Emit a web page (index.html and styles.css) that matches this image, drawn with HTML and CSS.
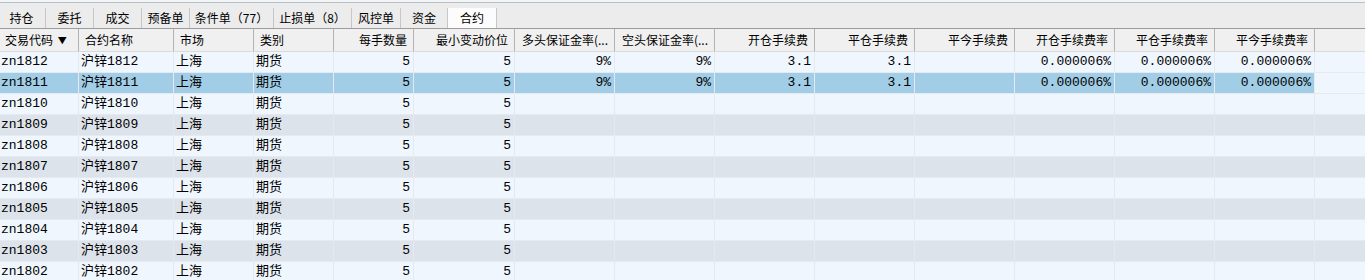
FILE: index.html
```html
<!DOCTYPE html>
<html lang="zh-CN">
<head>
    <meta charset="UTF-8">
    <title>合约</title>
    <link rel="stylesheet" href="styles.css">
    <script>
        const contracts = [];
        for (let m = 12; m >= 2; m--) {
            const month = '18' + String(m).padStart(2, '0');
            contracts.push({ code: 'zn' + month, name: '沪锌' + month });
        }

        window.onload = () => {
            const $rows = document.getElementById('rows');

            contracts.forEach((c, i) => {
                const full = i < 2;
                const cells = [
                    c.code, c.name, '上海', '期货', '5', '5',
                    full ? '9%' : '', full ? '9%' : '',
                    full ? '3.1' : '', full ? '3.1' : '', '',
                    full ? '0.000006%' : '', full ? '0.000006%' : '', full ? '0.000006%' : '',
                ];

                const $row = document.createElement('div');
                $row.className = 'row';
                if (i === 1) {
                    $row.classList.add('selected');
                } else if (i % 2 === 1) {
                    $row.classList.add('alt');
                }

                cells.forEach((text, n) => {
                    const $cell = document.createElement('div');
                    $cell.className = n < 4 ? 'cell' : 'cell num';
                    $cell.textContent = text;
                    $row.appendChild($cell);
                });

                const $fill = document.createElement('div');
                $fill.className = 'cell fill';
                $row.appendChild($fill);

                $rows.appendChild($row);
            });
        };
    </script>
</head>
<body>
    <div class="tabs">
        <div class="tab">持仓</div>
        <div class="tab">委托</div>
        <div class="tab">成交</div>
        <div class="tab">预备单</div>
        <div class="tab cond">条件单（77）</div>
        <div class="tab stop">止损单（8）</div>
        <div class="tab risk">风控单</div>
        <div class="tab fund">资金</div>
        <div class="tab active">合约</div>
    </div>
    <div class="head">
        <div class="cell">交易代码 <span class="sort">▼</span></div>
        <div class="cell">合约名称</div>
        <div class="cell">市场</div>
        <div class="cell">类别</div>
        <div class="cell num">每手数量</div>
        <div class="cell num">最小变动价位</div>
        <div class="cell num">多头保证金率(...</div>
        <div class="cell num">空头保证金率(...</div>
        <div class="cell num">开仓手续费</div>
        <div class="cell num">平仓手续费</div>
        <div class="cell num">平今手续费</div>
        <div class="cell num">开仓手续费率</div>
        <div class="cell num">平仓手续费率</div>
        <div class="cell num">平今手续费率</div>
        <div class="cell fill"></div>
    </div>
    <div id="rows"></div>
</body>
</html>
```

FILE: styles.css
```css
* {
    box-sizing: border-box;
}
body {
    margin: 0;
    background: #f5f5f5;
    font-family: "Noto Sans CJK SC", sans-serif;
    overflow: hidden;
}
.tabs {
    display: flex;
    align-items: flex-end;
    height: 26px;
    margin-top: 2px;
    border-top: 1px solid #b3c0ce;
    background: #ececec;
}
.tab {
    flex: none;
    width: 48px;
    height: 20px;
    line-height: 20px;
    text-align: center;
    font-size: 12px;
    border-right: 1px solid #c6c6c6;
    white-space: nowrap;
}
.tab:first-child {
    margin-left: -2px;
}
.tab.cond {
    width: 84px;
}
.tab.stop {
    width: 78px;
}
.tab.risk,
.tab.active {
    width: 49px;
}
.tab.fund {
    width: 47px;
}
.tab.active {
    background: #fcfcfc;
}
.head,
.row {
    display: grid;
    grid-template-columns: 79px 95px 80px 80px 80px 101px repeat(8, 100px) 1fr;
}
.head {
    height: 24px;
    border-top: 1px solid #9c9c9c;
    background: #f0f0f0;
    font-size: 12px;
}
.head .cell {
    height: 23px;
    line-height: 22px;
    padding: 0 6px;
    border-right: 1px solid #b4b4b4;
    border-bottom: 1px solid #dadada;
    white-space: nowrap;
    overflow: hidden;
}
.head .cell:first-child {
    padding-left: 5px;
}
.head .fill {
    border-right: none;
}
.sort {
    font-size: 9px;
    vertical-align: 1px;
    margin-left: 2px;
}
.row {
    height: 21px;
    background: #eff6fe;
    font-family: "Liberation Mono", "Noto Sans CJK SC", monospace;
    font-size: 13px;
}
.row .cell {
    height: 21px;
    line-height: 20px;
    padding: 0 3px 0 2px;
    border-right: 1px solid #e6eaee;
    border-bottom: 1px solid #e6eaee;
    white-space: nowrap;
    overflow: hidden;
}
.row .cell:first-child {
    padding-left: 1px;
}
.row.alt {
    background: #dde3eb;
}
.row.selected .cell {
    background: #a1cde6;
}
.row.selected .fill {
    background: #eff6fe;
}
.row .fill {
    border-right: none;
}
.num {
    text-align: right;
}
.head .num {
    padding-right: 6px;
}
```
